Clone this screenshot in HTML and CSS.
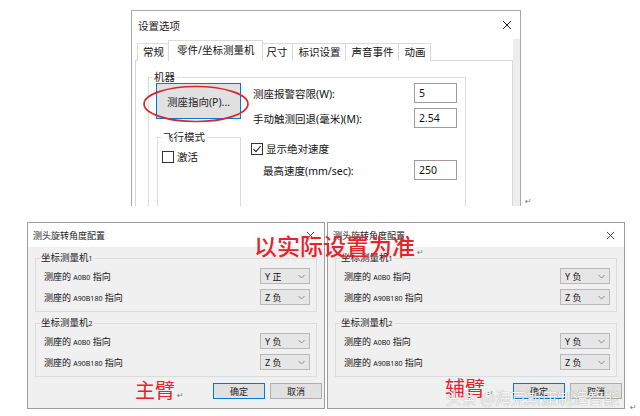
FILE: index.html
```html
<!DOCTYPE html>
<html lang="zh-CN">
<head>
    <meta charset="UTF-8">
    <title>测头旋转角度配置</title>
    <link rel="stylesheet" href="styles.css">
</head>
<body>
<div class="sheet">

    <!-- 设置选项 -->
    <div class="win win-options">
        <div class="titlebar">
            <span>设置选项</span>
            <svg class="close" width="10" height="10" viewBox="0 0 10 10"><path d="M1 1L9 9M9 1L1 9" stroke="#222" stroke-width="1"/></svg>
        </div>
        <div class="opt-body">
            <div class="opt-main">
                <div class="tabs">
                    <span class="tab">常规</span>
                    <span class="tab active">零件/坐标测量机</span>
                    <span class="tab">尺寸</span>
                    <span class="tab">标识设置</span>
                    <span class="tab">声音事件</span>
                    <span class="tab">动画</span>
                </div>
                <div class="tab-panel">
                    <fieldset class="group machine">
                        <legend>机器</legend>
                        <div class="machine-grid">
                            <button class="btn-probe">测座指向(P)...</button>
                            <div class="fields">
                                <div class="field"><label>测座报警容限(W):</label><input class="num" value="5"></div>
                                <div class="field"><label>手动触测回退(毫米)(M):</label><input class="num" value="2.54"></div>
                            </div>
                            <fieldset class="group fly">
                                <legend>飞行模式</legend>
                                <label class="check"><span class="box"></span>激活</label>
                            </fieldset>
                            <div class="fields">
                                <label class="check"><span class="box"><svg width="10" height="10" viewBox="0 0 10 10"><path d="M1.5 5.2L4 7.7L8.7 2" fill="none" stroke="#222" stroke-width="1.1"/></svg></span>显示绝对速度</label>
                                <div class="field indent"><label>最高速度(mm/sec):</label><input class="num" value="250"></div>
                            </div>
                        </div>
                    </fieldset>
                </div>
            </div>
            <div class="gutter"></div>
        </div>
    </div>

    <!-- 主臂 -->
    <div class="win win-probe arm-main">
        <div class="titlebar small">
            <span>测头旋转角度配置</span>
            <svg class="close" width="9" height="9" viewBox="0 0 10 10"><path d="M1 1L9 9M9 1L1 9" stroke="#333" stroke-width="1"/></svg>
        </div>
        <div class="probe-body">
            <fieldset class="cmm">
                <legend>坐标测量机<small>1</small></legend>
                <div class="row"><span>测座的 <small>A0B0</small> 指向</span><span class="select">Y 正<svg width="7" height="5" viewBox="0 0 7 5"><path d="M0.5 1L3.5 4L6.5 1" fill="none" stroke="#888"/></svg></span></div>
                <div class="row"><span>测座的 <small>A90B180</small> 指向</span><span class="select">Z 负<svg width="7" height="5" viewBox="0 0 7 5"><path d="M0.5 1L3.5 4L6.5 1" fill="none" stroke="#888"/></svg></span></div>
            </fieldset>
            <fieldset class="cmm">
                <legend>坐标测量机<small>2</small></legend>
                <div class="row"><span>测座的 <small>A0B0</small> 指向</span><span class="select">Y 负<svg width="7" height="5" viewBox="0 0 7 5"><path d="M0.5 1L3.5 4L6.5 1" fill="none" stroke="#888"/></svg></span></div>
                <div class="row"><span>测座的 <small>A90B180</small> 指向</span><span class="select">Z 负<svg width="7" height="5" viewBox="0 0 7 5"><path d="M0.5 1L3.5 4L6.5 1" fill="none" stroke="#888"/></svg></span></div>
            </fieldset>
            <div class="actions">
                <button class="btn default">确定</button>
                <button class="btn">取消</button>
            </div>
        </div>
    </div>

    <!-- 辅臂 -->
    <div class="win win-probe arm-aux">
        <div class="titlebar small">
            <span>测头旋转角度配置</span>
            <svg class="close" width="9" height="9" viewBox="0 0 10 10"><path d="M1 1L9 9M9 1L1 9" stroke="#333" stroke-width="1"/></svg>
        </div>
        <div class="probe-body">
            <fieldset class="cmm">
                <legend>坐标测量机<small>1</small></legend>
                <div class="row"><span>测座的 <small>A0B0</small> 指向</span><span class="select">Y 负<svg width="7" height="5" viewBox="0 0 7 5"><path d="M0.5 1L3.5 4L6.5 1" fill="none" stroke="#888"/></svg></span></div>
                <div class="row"><span>测座的 <small>A90B180</small> 指向</span><span class="select">Z 负<svg width="7" height="5" viewBox="0 0 7 5"><path d="M0.5 1L3.5 4L6.5 1" fill="none" stroke="#888"/></svg></span></div>
            </fieldset>
            <fieldset class="cmm">
                <legend>坐标测量机<small>2</small></legend>
                <div class="row"><span>测座的 <small>A0B0</small> 指向</span><span class="select">Y 负<svg width="7" height="5" viewBox="0 0 7 5"><path d="M0.5 1L3.5 4L6.5 1" fill="none" stroke="#888"/></svg></span></div>
                <div class="row"><span>测座的 <small>A90B180</small> 指向</span><span class="select">Z 负<svg width="7" height="5" viewBox="0 0 7 5"><path d="M0.5 1L3.5 4L6.5 1" fill="none" stroke="#888"/></svg></span></div>
            </fieldset>
            <div class="actions">
                <button class="btn default">确定</button>
                <button class="btn">取消</button>
            </div>
        </div>
    </div>

    <!-- annotations -->
    <svg class="ring" width="108" height="40" viewBox="0 0 108 40"><ellipse cx="54" cy="20" rx="52" ry="17.5" fill="none" stroke="#d42a2f" stroke-width="1.6"/></svg>
    <div class="note note-rule">以实际设置为准<span class="ret">↵</span></div>
    <div class="note note-main">主臂<span class="ret">↵</span></div>
    <div class="note note-aux">辅臂<span class="ret">↵</span></div>
    <div class="watermark">头条 @海克斯康制造智能</div>
    <span class="ret mark-top">↵</span>
    <span class="ret mark-end">↵</span>
</div>
</body>
</html>
```

FILE: styles.css
```css
body {
    margin: 0;
    background: #fff;
    font-family: "Noto Sans", "Noto Sans CJK SC", sans-serif;
    color: #111;
}
.sheet {
    position: relative;
    width: 640px;
    height: 416px;
    overflow: hidden;
}
.win {
    position: absolute;
    box-sizing: border-box;
    background: #fff;
    overflow: hidden;
}
.titlebar {
    display: flex;
    justify-content: space-between;
    align-items: center;
    height: 28px;
    padding: 0 8px 0 6px;
    font-size: 10.5px;
    color: #222;
}

/* 设置选项 */
.win-options {
    left: 131px;
    top: 10px;
    width: 390px;
    height: 196px;
    border: 1px solid #a8a8a8;
    border-bottom: none;
}
.opt-body {
    display: flex;
    padding-left: 3px;
    height: 100%;
}
.opt-main {
    flex: 1;
}
.gutter {
    width: 7px;
    background: #ededed;
}
.tabs {
    display: flex;
    align-items: flex-end;
    height: 22px;
    padding-left: 2px;
    margin-bottom: -1px;
    position: relative;
    z-index: 1;
}
.tab {
    height: 17px;
    line-height: 17px;
    padding: 0 5px;
    font-size: 10.5px;
    border: 1px solid #dadada;
    border-bottom: none;
    border-left: none;
    background: #fff;
}
.tab:first-child {
    border-left: 1px solid #dadada;
}
.tab.active {
    height: 20px;
    line-height: 18px;
    padding: 0 8px;
    margin-left: -2px;
    margin-right: -2px;
    border-left: 1px solid #dadada;
    position: relative;
}
.tab-panel {
    border: 1px solid #d9d9d9;
    height: 200px;
    padding: 10px 0 0 12px;
}
.group {
    margin: 0;
    border: 1px solid #dcdcdc;
    font-size: 10.5px;
}
.group legend {
    line-height: 12px;
    padding: 0 2px;
    margin-left: -4px;
    color: #222;
}
.machine {
    width: 318px;
    box-sizing: border-box;
    height: 180px;
    padding: 0 8px 0 7px;
}
.machine-grid {
    display: grid;
    grid-template-columns: 85px 1fr;
    column-gap: 12px;
    row-gap: 3px;
}
.btn-probe {
    height: 36px;
    background: #e1e1e1;
    border: 1px solid #0078d7;
    font-family: inherit;
    font-size: 10.5px;
    color: #222;
    padding: 0;
}
.fields {
    display: flex;
    flex-direction: column;
    gap: 5px;
}
.field {
    display: flex;
    justify-content: space-between;
    align-items: center;
}
.field.indent {
    padding-left: 10px;
    margin-top: -1px;
}
.num {
    width: 43px;
    height: 20px;
    box-sizing: border-box;
    border: 1px solid #9c9c9c;
    font-family: inherit;
    font-size: 10.5px;
    padding: 0 4px;
    color: #111;
}
.fly {
    height: 80px;
    padding: 6px 4px 0 4px;
    margin-left: 1px;
}
.fly legend {
    margin-left: -1px;
}
.check {
    display: flex;
    align-items: center;
    gap: 3px;
    font-size: 10.5px;
}
.fields .check {
    margin-top: 10px;
    margin-left: -2px;
}
.box {
    width: 10px;
    height: 10px;
    border: 1px solid #333;
    display: flex;
}

/* 测头旋转角度配置 */
.win-probe {
    top: 222px;
    width: 298px;
    height: 187px;
    border: 1px solid #9d9d9d;
}
.arm-main {
    left: 27px;
}
.arm-aux {
    left: 327px;
}
.titlebar.small {
    height: 24px;
    padding: 0 9px 0 5px;
    font-size: 9px;
}
.probe-body {
    background: #f0f0f0;
    height: 100%;
    padding: 5px 0 0 7px;
    font-size: 9px;
}
.cmm {
    width: 282px;
    box-sizing: border-box;
    margin: 0 0 5px;
    padding: 3px 6px 6px 8px;
    border: 1px solid #dcdcdc;
    display: flex;
    flex-direction: column;
    gap: 5px;
}
.cmm legend {
    line-height: 12px;
    padding: 0 1px;
    margin-left: -4px;
    font-size: 9.5px;
    color: #222;
}
.cmm legend small {
    font-size: 7px;
}
.row {
    display: flex;
    justify-content: space-between;
    align-items: center;
}
.row small {
    font-size: 7px;
}
.select {
    width: 50px;
    height: 16px;
    box-sizing: border-box;
    border: 1px solid #b9b9b9;
    background: #e6e6e6;
    display: flex;
    justify-content: space-between;
    align-items: center;
    padding: 0 4px 0 4px;
    font-size: 9px;
}
.actions {
    display: flex;
    justify-content: flex-end;
    gap: 5px;
    padding-right: 2px;
    margin-top: 6px;
}
.btn {
    width: 52px;
    height: 16px;
    background: #e1e1e1;
    border: 1px solid #adadad;
    font-family: inherit;
    font-size: 9px;
    padding: 0;
    color: #222;
}
.btn.default {
    border-color: #0078d7;
}

/* annotations */
.ring {
    position: absolute;
    left: 142px;
    top: 84px;
}
.note {
    position: absolute;
    color: #e4242b;
    font-family: "Noto Sans CJK SC", sans-serif;
    line-height: 1;
    white-space: nowrap;
}
.note-rule {
    left: 254px;
    top: 234px;
    font-size: 23px;
    font-weight: 500;
}
.note-main {
    left: 135px;
    top: 380px;
    font-size: 20px;
}
.note-aux {
    left: 445px;
    top: 378px;
    font-size: 20px;
}
.ret {
    color: #777;
    font-size: 8px;
    font-family: "DejaVu Sans", sans-serif;
    font-weight: normal;
    vertical-align: bottom;
    margin-left: 2px;
}
.watermark {
    position: absolute;
    left: 446px;
    top: 386px;
    font-size: 15.5px;
    font-family: "Noto Sans CJK SC", sans-serif;
    color: rgba(255, 255, 255, 0.92);
    text-shadow: 0 0 1px rgba(0, 0, 0, 0.45);
    white-space: nowrap;
}
.mark-top {
    position: absolute;
    left: 523px;
    top: 197px;
}
.mark-end {
    position: absolute;
    left: 628px;
    top: 403px;
}
```
